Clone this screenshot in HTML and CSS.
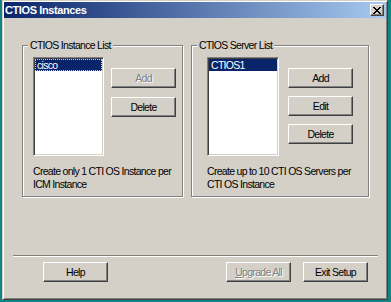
FILE: index.html
```html
<!DOCTYPE html>
<html lang="en">
<head>
  <meta charset="UTF-8">
  <title>CTIOS Instances</title>
  <link rel="stylesheet" href="styles.css">
</head>
<body>
  <div class="window">
    <div class="titlebar">
      <span class="title">CTIOS Instances</span>
      <button class="close-btn" aria-label="Close">
        <svg width="8" height="7" viewBox="0 0 8 7"><path d="M0 0h2v1H0zM6 0h2v1H6zM1 1h2v1H1zM5 1h2v1H5zM2 2h4v1H2zM3 3h2v1H3zM2 4h4v1H2zM1 5h2v1H1zM5 5h2v1H5zM0 6h2v1H0zM6 6h2v1H6z" fill="#000"/></svg>
      </button>
    </div>
    <div class="dialog">
      <div class="groups">
        <fieldset class="group group-instances">
          <legend>CTIOS Instance List</legend>
          <div class="group-content">
            <div class="group-body">
              <ul class="listbox">
                <li class="item selected focused">cisco</li>
              </ul>
              <div class="btn-col">
                <button class="btn" disabled>Add</button>
                <button class="btn">Delete</button>
              </div>
            </div>
            <p class="note">Create only 1 CTI OS Instance per<br>ICM Instance</p>
          </div>
        </fieldset>
        <fieldset class="group group-servers">
          <legend>CTIOS Server List</legend>
          <div class="group-content">
            <div class="group-body">
              <ul class="listbox">
                <li class="item selected">CTIOS1</li>
              </ul>
              <div class="btn-col">
                <button class="btn">Add</button>
                <button class="btn">Edit</button>
                <button class="btn">Delete</button>
              </div>
            </div>
            <p class="note">Create up to 10 CTI OS Servers per<br>CTI OS Instance</p>
          </div>
        </fieldset>
      </div>
      <div class="separator"></div>
      <div class="footer">
        <button class="btn">Help</button>
        <button class="btn upgrade" disabled><u>U</u>pgrade All</button>
        <button class="btn">Exit Setup</button>
      </div>
    </div>
  </div>
</body>
</html>
```

FILE: styles.css
```css
body {
  margin: 0;
  background-color: #128484;
  font-family: "Liberation Sans", Arial, sans-serif;
  font-size: 10.5px;
  letter-spacing: -0.7px;
  color: #000000;
}
.window {
  margin-left: 2px;
  width: 386px;
  height: 300px;
  box-sizing: border-box;
  background-color: #d4d0c8;
  border: 1px solid;
  border-color: #d4d0c8 #404040 #404040 #d4d0c8;
  box-shadow: inset 1px 1px 0 #ffffff, inset -1px -1px 0 #808080;
  padding: 1px;
  display: flex;
  flex-direction: column;
}
.titlebar {
  height: 16px;
  display: flex;
  align-items: center;
  padding: 0 2px 0 1px;
  background: linear-gradient(to right, #0a246a, #a6caf0);
}
.title {
  color: #ffffff;
  font-weight: bold;
  font-size: 11px;
  letter-spacing: -0.4px;
  line-height: 13px;
}
.close-btn {
  margin-left: auto;
  width: 14px;
  height: 12px;
  padding: 0;
  display: flex;
  align-items: center;
  justify-content: center;
  background-color: #d4d0c8;
  border: 1px solid;
  border-color: #ffffff #404040 #404040 #ffffff;
  box-shadow: inset -1px -1px 0 #808080;
}
.dialog {
  padding: 21px 8px 0 9px;
}
.groups {
  display: flex;
  gap: 8px;
  margin-left: 9px;
}
.group {
  margin: 0;
  padding: 0;
  min-width: 0;
  height: 158px;
  box-sizing: border-box;
  border: 1px solid #808080;
  box-shadow: inset 1px 1px 0 #ffffff, 1px 1px 0 #ffffff;
}
.group legend {
  margin-left: 5px;
  padding: 0 2px;
  line-height: 13px;
  background-color: #d4d0c8;
}
.group-instances {
  width: 161px;
}
.group-servers {
  width: 178px;
}
.group-content {
  padding: 5px 6px 0 10px;
}
.group-servers .group-content {
  padding-left: 15px;
}
.group-body {
  display: flex;
  gap: 7px;
}
.group-servers .group-body {
  gap: 9px;
}
.listbox {
  width: 72px;
  height: 99px;
  box-sizing: border-box;
  margin: 0;
  padding: 1px;
  list-style: none;
  background-color: #ffffff;
  border: 1px solid;
  border-color: #808080 #ffffff #ffffff #808080;
  box-shadow: inset 1px 1px 0 #404040, inset -1px -1px 0 #d4d0c8;
}
.item {
  height: 12px;
  line-height: 12px;
  padding: 0 2px;
}
.selected {
  background-color: #0a246a;
  color: #ffffff;
}
.focused {
  outline: 1px dotted #d4d0c8;
  outline-offset: -1px;
}
.btn-col {
  display: flex;
  flex-direction: column;
  gap: 8px;
  padding-top: 11px;
}
.group-instances .btn-col {
  gap: 9px;
}
.btn {
  width: 65px;
  height: 20px;
  padding: 0;
  font: inherit;
  letter-spacing: inherit;
  color: #000000;
  background-color: #d4d0c8;
  border: 1px solid;
  border-color: #ffffff #404040 #404040 #ffffff;
  box-shadow: inset -1px -1px 0 #808080;
}
.btn:disabled {
  color: #808080;
  text-shadow: 1px 1px 0 #ffffff;
}
.note {
  margin: 9px 0 0;
  line-height: 13px;
  white-space: nowrap;
}
.separator {
  margin-top: 58px;
  border-top: 1px solid #808080;
  border-bottom: 1px solid #ffffff;
}
.footer {
  display: flex;
  gap: 12px;
  margin-top: 5px;
  padding: 0 10px 0 30px;
}
.upgrade {
  margin-left: auto;
}
```
